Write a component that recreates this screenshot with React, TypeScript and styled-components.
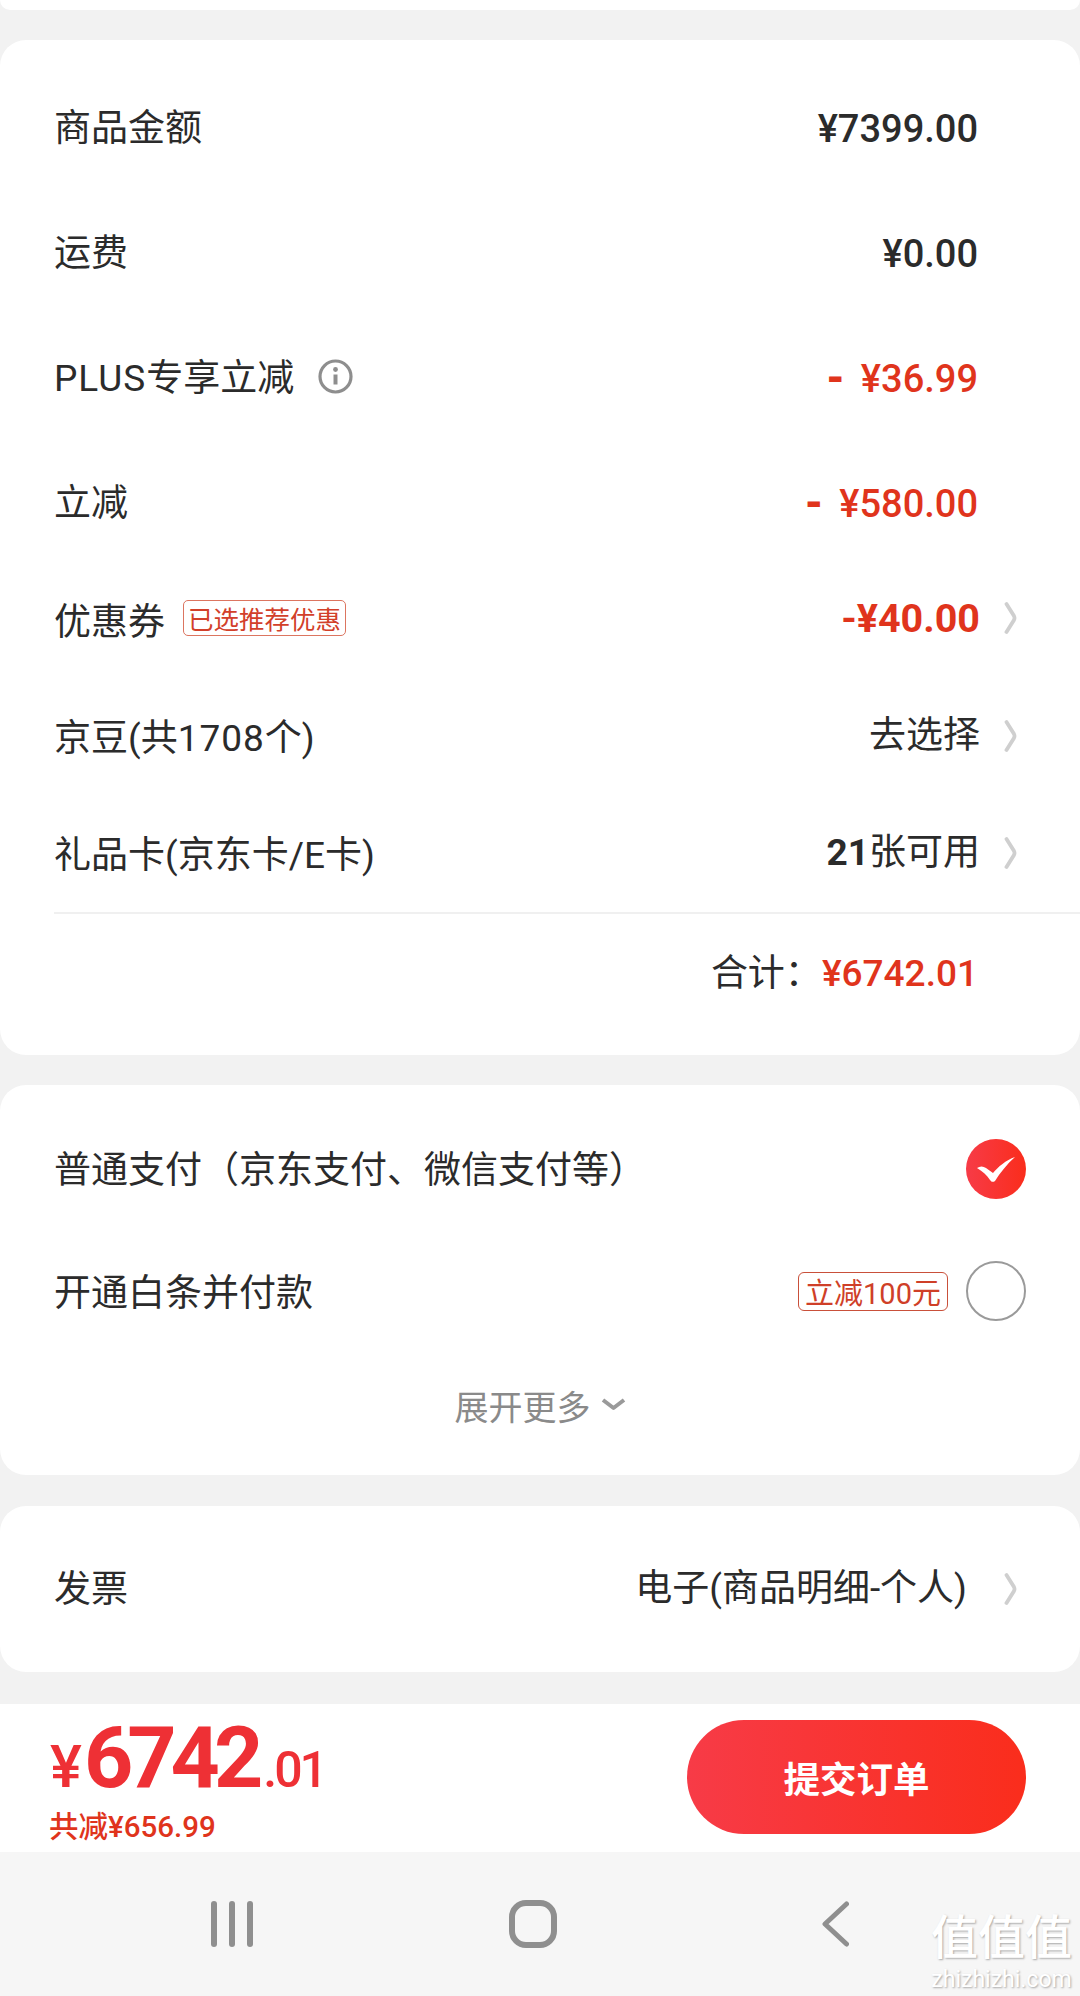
import styled, { createGlobalStyle } from "styled-components";

const GlobalStyle = createGlobalStyle`
  html, body {
    margin: 0;
    padding: 0;
    background: #f2f2f2;
  }
  body {
    font-family: Roboto, "Noto Sans CJK SC", sans-serif;
    color: #2b2b2b;
  }
`;

type Tone = "dark" | "red";

const toneColor = (tone?: Tone) => (tone === "red" ? "#e0341c" : "#2b2b2b");

const Chevron = () => (
  <ChevronIcon width="14" height="32" viewBox="0 0 14 32" fill="none">
    <path d="M2.500 2 L10 14 Q11 16 10 18 L2.500 30" stroke="#cfcfcf" strokeWidth="3.800" strokeLinecap="round" />
  </ChevronIcon>
);

const InfoIcon = () => (
  <InfoSvg width="35" height="35" viewBox="0 0 35 35" fill="none">
    <circle cx="17.5" cy="17.5" r="15.5" stroke="#8e8e8e" strokeWidth="3.2" />
    <circle cx="17.5" cy="10.5" r="2.4" fill="#8e8e8e" />
    <path d="M17.5 15.5 V25.5" stroke="#8e8e8e" strokeWidth="4" />
  </InfoSvg>
);

const CheckMark = () => (
  <svg width="60" height="60" viewBox="0 0 60 60" fill="none">
    <path
      d="M11 29 C14 27 17 27 20 29 L27 34 C32 28 40 21 49 18 C41 25 34 34 29 42 C27 43.500 25.500 43 24 41 C21 36 16 32 11 29 Z"
      fill="#fff"
    />
  </svg>
);

const DownArrow = () => (
  <ArrowSvg width="25" height="14" viewBox="0 0 25 14" fill="none">
    <path d="M2 3 L12.500 11 L23 3" stroke="#9a9a9a" strokeWidth="4" strokeLinejoin="round" />
  </ArrowSvg>
);

const HomeIcon = () => (
  <svg width="48" height="48" viewBox="0 0 48 48" fill="none">
    <rect x="3" y="3" width="42" height="42" rx="14" stroke="#8f8f8f" strokeWidth="6" />
  </svg>
);

const BackIcon = () => (
  <BackSvg width="27" height="46" viewBox="0 0 27 46" fill="none">
    <path d="M24.500 3 L3 23 L24.500 43" stroke="#8f8f8f" strokeWidth="5" strokeLinecap="round" strokeLinejoin="round" />
  </BackSvg>
);

const App = () => {
  return (
    <Page>
      <GlobalStyle />
      <TopStub />

      <SummaryCard>
        <Row $height={125}>
          <Label>商品金额</Label>
          <Value>¥7399.00</Value>
        </Row>
        <Row $height={125}>
          <Label>运费</Label>
          <Value>¥0.00</Value>
        </Row>
        <Row $height={125}>
          <LabelGroup>
            <Label><Latin>PLUS</Latin>专享立减</Label>
            <InfoIcon />
          </LabelGroup>
          <Value $tone="red"><Dash>-</Dash>¥36.99</Value>
        </Row>
        <Row $height={125}>
          <Label>立减</Label>
          <Value $tone="red"><Dash>-</Dash>¥580.00</Value>
        </Row>
        <Row $height={111} $link>
          <LabelGroup>
            <Label $drop={5}>优惠券</Label>
            <CouponTag>已选推荐优惠</CouponTag>
          </LabelGroup>
          <RightSide>
            <CouponValue>-¥40.00</CouponValue>
            <Chevron />
          </RightSide>
        </Row>
        <Row $height={124} $link>
          <Label>京豆(共<Latin>1708</Latin>个)</Label>
          <RightSide>
            <PlainValue>去选择</PlainValue>
            <Chevron />
          </RightSide>
        </Row>
        <Row $height={110} $link>
          <Label>礼品卡(京东卡/E卡)</Label>
          <RightSide>
            <PlainValue><Strong>21</Strong>张可用</PlainValue>
            <Chevron />
          </RightSide>
        </Row>
        <Divider />
        <TotalRow>
          <Label $drop={0}>合计：</Label>
          <TotalValue>¥6742.01</TotalValue>
        </TotalRow>
      </SummaryCard>

      <PaymentCard>
        <PayRow>
          <Label $drop={4}>普通支付（京东支付、微信支付等）</Label>
          <RadioChecked>
            <CheckMark />
          </RadioChecked>
        </PayRow>
        <PayRow>
          <Label $drop={6}>开通白条并付款</Label>
          <PayOption>
            <PromoTag>立减100元</PromoTag>
            <RadioEmpty />
          </PayOption>
        </PayRow>
        <ExpandRow>
          <span>展开更多</span>
          <DownArrow />
        </ExpandRow>
      </PaymentCard>

      <InvoiceCard>
        <Label $drop={1}>发票</Label>
        <InvoiceRight>
          <PlainValue>电子(商品明细-个人)</PlainValue>
          <Chevron />
        </InvoiceRight>
      </InvoiceCard>

      <BottomBar>
        <PriceBlock>
          <PriceLine>
            <Yen>¥</Yen>
            <BigPrice>6742</BigPrice>
            <Cents>.01</Cents>
          </PriceLine>
          <Saved>共减¥656.99</Saved>
        </PriceBlock>
        <SubmitButton>提交订单</SubmitButton>
      </BottomBar>

      <NavBar>
        <Bars>
          <Bar />
          <Bar />
          <Bar />
        </Bars>
        <HomeIcon />
        <BackIcon />
        <Watermark>
          <WatermarkMark>值值值</WatermarkMark>
          <WatermarkUrl>zhizhizhi.com</WatermarkUrl>
        </Watermark>
      </NavBar>
    </Page>
  );
};

const Page = styled.div`
  width: 1080px;
  height: 1996px;
  overflow: hidden;
  background: #f2f2f2;
`;

const TopStub = styled.div`
  height: 10px;
  background: #fff;
  border-radius: 0 0 24px 24px;
`;

const Card = styled.section`
  background: #fff;
  border-radius: 26px;
`;

const SummaryCard = styled(Card)`
  margin-top: 30px;
  height: 1015px;
  padding-top: 25px;
  box-sizing: border-box;
`;

const Row = styled.div<{ $height: number; $link?: boolean }>`
  height: ${(p) => p.$height}px;
  display: flex;
  align-items: center;
  justify-content: space-between;
  padding: 0 ${(p) => (p.$link ? 62 : 102)}px 0 54px;
`;

const Label = styled.span<{ $drop?: number }>`
  font-size: 37px;
  line-height: 50px;
  padding-top: ${(p) => p.$drop ?? 2}px;
  font-weight: 400;
  color: #2b2b2b;
  white-space: nowrap;
`;

const Latin = styled.span`
  letter-spacing: 1px;
`;

const LabelGroup = styled.div`
  display: flex;
  align-items: center;
`;

const InfoSvg = styled.svg`
  margin-left: 24px;
  margin-top: -3px;
`;

const Value = styled.span<{ $tone?: Tone }>`
  font-size: 38px;
  line-height: 50px;
  padding-top: 2px;
  font-weight: 500;
  color: ${(p) => toneColor(p.$tone)};
  white-space: nowrap;
`;

const CouponValue = styled.span`
  font-size: 39.500px;
  line-height: 50px;
  padding-top: 2px;
  font-weight: 700;
  color: #e0341c;
  white-space: nowrap;
`;

const TotalValue = styled.span`
  font-size: 37px;
  line-height: 50px;
  font-weight: 500;
  color: #e0341c;
  white-space: nowrap;
`;

const Dash = styled.b`
  font-weight: 900;
  font-size: 42px;
  margin-right: 16px;
`;

const PlainValue = styled.span`
  font-size: 37px;
  line-height: 50px;
  color: #2b2b2b;
  white-space: nowrap;
`;

const Strong = styled.b`
  font-weight: 700;
`;

const RightSide = styled.div`
  display: flex;
  align-items: center;
  gap: 24px;
  margin-top: -5px;
`;

const ChevronIcon = styled.svg`
  flex: none;
  display: block;
`;

const CouponTag = styled.span`
  margin-left: 18px;
  height: 36px;
  padding: 0 4px;
  box-sizing: border-box;
  display: inline-flex;
  align-items: center;
  border: 1px solid #dc7560;
  border-radius: 5px;
  font-size: 25.500px;
  color: #d2402a;
  margin-top: -6px;
`;

const Divider = styled.div`
  height: 2px;
  margin: 2px 0 0 54px;
  background: #f0f0f0;
`;

const TotalRow = styled.div`
  height: 120px;
  display: flex;
  align-items: center;
  justify-content: flex-end;
  padding-right: 102px;
`;

const PaymentCard = styled(Card)`
  margin-top: 30px;
  height: 390px;
  padding-top: 23px;
  box-sizing: border-box;
`;

const PayRow = styled.div`
  height: 122px;
  display: flex;
  align-items: center;
  justify-content: space-between;
  padding: 0 54px 0 54px;
`;

const PayOption = styled.div`
  display: flex;
  align-items: center;
  gap: 18px;
`;

const PromoTag = styled.span`
  height: 39px;
  width: 150px;
  box-sizing: border-box;
  display: inline-flex;
  align-items: center;
  justify-content: center;
  border: 1px solid #c9503a;
  border-radius: 6px;
  font-size: 29px;
  color: #cf3f28;
  white-space: nowrap;
`;

const RadioChecked = styled.span`
  width: 60px;
  height: 60px;
  border-radius: 50%;
  background: linear-gradient(90deg, #f73b47, #fa2d1c);
  display: block;
`;

const RadioEmpty = styled.span`
  width: 60px;
  height: 60px;
  box-sizing: border-box;
  border-radius: 50%;
  border: 2.500px solid #9a9a9a;
  display: block;
`;

const ExpandRow = styled.div`
  height: 106px;
  display: flex;
  align-items: center;
  justify-content: center;
  font-size: 34px;
  color: #8a8a8a;
`;

const ArrowSvg = styled.svg`
  margin-left: 10px;
  margin-top: -3px;
`;

const InvoiceCard = styled(Card)`
  margin-top: 31px;
  height: 166px;
  display: flex;
  align-items: center;
  justify-content: space-between;
  padding: 0 62px 0 54px;
`;

const InvoiceRight = styled.div`
  display: flex;
  align-items: center;
  gap: 37px;
`;

const BottomBar = styled.div`
  margin-top: 32px;
  height: 148px;
  background: #fff;
  display: flex;
  align-items: center;
  justify-content: space-between;
  padding: 0 54px 2px 50px;
  box-sizing: border-box;
`;

const PriceBlock = styled.div`
  display: flex;
  flex-direction: column;
  color: #ee3035;
  margin-top: 7px;
`;

const PriceLine = styled.div`
  display: flex;
  align-items: baseline;
  height: 88px;
  line-height: 88px;
`;

const Yen = styled.span`
  font-size: 60px;
  font-weight: 500;
  margin-right: 2px;
`;

const BigPrice = styled.span`
  font-size: 86px;
  font-weight: 700;
  letter-spacing: -6px;
`;

const Cents = styled.span`
  font-size: 50px;
  font-weight: 500;
  letter-spacing: -3px;
  margin-left: 6px;
`;

const Saved = styled.div`
  margin-top: 5px;
  margin-left: -1px;
  font-size: 29.500px;
  line-height: 40px;
  font-weight: 500;
  color: #e0341c;
`;

const SubmitButton = styled.button`
  width: 339px;
  height: 114px;
  border: 0;
  border-radius: 57px;
  background: linear-gradient(90deg, #f73b47, #fa2d1c);
  color: #fff;
  font-family: inherit;
  font-size: 36.500px;
  font-weight: 700;
  padding: 0;
`;

const NavBar = styled.nav`
  position: relative;
  height: 144px;
  background: #f6f6f6;
  display: flex;
  align-items: center;
  justify-content: space-between;
  padding: 0 231px 0 211px;
`;

const Bars = styled.div`
  display: flex;
  gap: 12px;
`;

const Bar = styled.span`
  width: 6px;
  height: 46px;
  border-radius: 3px;
  background: #8f8f8f;
`;

const BackSvg = styled.svg`
  margin-left: 9px;
`;

const Watermark = styled.div`
  position: absolute;
  right: 6px;
  bottom: 4px;
  width: 145px;
  display: flex;
  flex-direction: column;
  align-items: center;
  color: #fff;
`;

const WatermarkMark = styled.div`
  font-size: 47px;
  line-height: 50px;
  font-weight: 500;
  white-space: nowrap;
  text-shadow: 1px 1px 2px #a8a8a8;
`;

const WatermarkUrl = styled.div`
  margin-top: 5px;
  font-size: 23px;
  line-height: 24px;
  white-space: nowrap;
  text-shadow: 1px 1px 2px #a8a8a8;
`;

export default App;
